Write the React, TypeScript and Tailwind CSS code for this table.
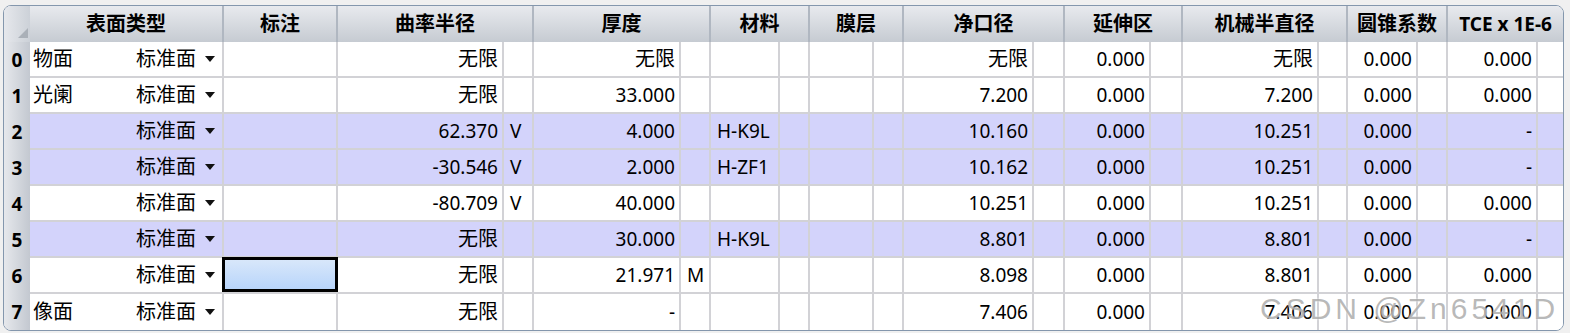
import React from "react";

const COLS =
  "grid grid-cols-[26px_194px_114px_166px_30px_147px_30px_69px_30px_64px_30px_130px_31px_86px_32px_136px_29px_70px_30px_90px_25px]";

type Row = {
  name?: string;
  hl?: boolean;
  r: string;
  rs?: string;
  t: string;
  ts?: string;
  mat?: string;
  ca: string;
  ext: string;
  mech: string;
  conic: string;
  tce: string;
  sel?: boolean;
};

const rows: Row[] = [
  { name: "物面", r: "无限", t: "无限", ca: "无限", ext: "0.000", mech: "无限", conic: "0.000", tce: "0.000" },
  { name: "光阑", r: "无限", t: "33.000", ca: "7.200", ext: "0.000", mech: "7.200", conic: "0.000", tce: "0.000" },
  { hl: true, r: "62.370", rs: "V", t: "4.000", mat: "H-K9L", ca: "10.160", ext: "0.000", mech: "10.251", conic: "0.000", tce: "-" },
  { hl: true, r: "-30.546", rs: "V", t: "2.000", mat: "H-ZF1", ca: "10.162", ext: "0.000", mech: "10.251", conic: "0.000", tce: "-" },
  { r: "-80.709", rs: "V", t: "40.000", ca: "10.251", ext: "0.000", mech: "10.251", conic: "0.000", tce: "0.000" },
  { hl: true, r: "无限", t: "30.000", mat: "H-K9L", ca: "8.801", ext: "0.000", mech: "8.801", conic: "0.000", tce: "-" },
  { r: "无限", t: "21.971", ts: "M", ca: "8.098", ext: "0.000", mech: "8.801", conic: "0.000", tce: "0.000", sel: true },
  { name: "像面", r: "无限", t: "-", ca: "7.406", ext: "0.000", mech: "7.406", conic: "0.000", tce: "0.000" },
];

const headers: { label: string; span: string }[] = [
  { label: "表面类型", span: "col-span-1" },
  { label: "标注", span: "col-span-1" },
  { label: "曲率半径", span: "col-span-2" },
  { label: "厚度", span: "col-span-2" },
  { label: "材料", span: "col-span-2" },
  { label: "膜层", span: "col-span-2" },
  { label: "净口径", span: "col-span-2" },
  { label: "延伸区", span: "col-span-2" },
  { label: "机械半直径", span: "col-span-2" },
  { label: "圆锥系数", span: "col-span-2" },
  { label: "TCE x 1E-6", span: "col-span-2" },
];

const cjk = (s: string) => /[\u4e00-\u9fff]/.test(s);

function Text({ v }: { v: string }) {
  return <span className={cjk(v) ? "text-[20px]" : "text-[19px]"}>{v}</span>;
}

function Val({ v, last }: { v: string; last: boolean }) {
  return (
    <div
      className={
        last
          ? "flex items-center justify-end pr-[4px] border-r-2 border-[#d2d2d6]"
          : "flex items-center justify-end pr-[4px] border-r-2 border-b-2 border-[#d2d2d6]"
      }
    >
      <Text v={v} />
    </div>
  );
}

function Sub({ v, last, end }: { v?: string; last: boolean; end?: boolean }) {
  let cls = "flex items-center pl-[6px] border-[#d2d2d6]";
  if (!end) cls += " border-r-2";
  if (!last) cls += " border-b-2";
  return <div className={cls}>{v && <Text v={v} />}</div>;
}

function Caret() {
  return (
    <svg width="10" height="6" viewBox="0 0 10 6" className="ml-[9px]">
      <path d="M0 0 L10 0 L5 6 Z" fill="#111" />
    </svg>
  );
}

function BodyRow({ row, i, last }: { row: Row; i: number; last: boolean }) {
  const bg = row.hl ? "bg-[#d3d3fb]" : "bg-white";
  return (
    <div className={`${COLS} h-[36px]`}>
      <div className="flex items-center justify-center bg-linear-to-r from-[#e6e8ec] to-[#c3c8d0] font-bold text-[19px]">
        {i}
      </div>
      {/* 表面类型 */}
      <div
        className={`${bg} ${last ? "" : "border-b-2"} border-r-2 border-[#d2d2d6] flex items-center justify-between pl-[3px] pr-[7px]`}
      >
        <span className="text-[20px]">{row.name ?? ""}</span>
        <span className="flex items-center text-[20px]">
          标准面
          <Caret />
        </span>
      </div>
      {/* 标注 */}
      <div className={`${bg} ${last ? "" : "border-b-2"} border-r-2 border-[#d2d2d6] relative`}>
        {row.sel && (
          <div className="absolute left-[-2px] top-[-1px] w-[116px] h-[35px] border-[3px] border-black bg-linear-to-b from-[#d8e7fa] to-[#b8d5fb]" />
        )}
      </div>
      <Cells row={row} bg={bg} last={last} />
    </div>
  );
}

function Cells({ row, bg, last }: { row: Row; bg: string; last: boolean }) {
  const wrap = (node: React.ReactNode, k: string) => (
    <div key={k} className={`${bg} grid`}>
      {node}
    </div>
  );
  return (
    <>
      {wrap(<Val v={row.r} last={last} />, "r")}
      {wrap(<Sub v={row.rs} last={last} />, "rs")}
      {wrap(<Val v={row.t} last={last} />, "t")}
      {wrap(<Sub v={row.ts} last={last} />, "ts")}
      {wrap(<Sub v={row.mat} last={last} />, "m")}
      {wrap(<Sub last={last} />, "ms")}
      {wrap(<Sub last={last} />, "c")}
      {wrap(<Sub last={last} />, "cs")}
      {wrap(<Val v={row.ca} last={last} />, "ca")}
      {wrap(<Sub last={last} />, "cas")}
      {wrap(<Val v={row.ext} last={last} />, "e")}
      {wrap(<Sub last={last} />, "es")}
      {wrap(<Val v={row.mech} last={last} />, "me")}
      {wrap(<Sub last={last} />, "mes")}
      {wrap(<Val v={row.conic} last={last} />, "co")}
      {wrap(<Sub last={last} />, "cos")}
      {wrap(<Val v={row.tce} last={last} />, "tc")}
      {wrap(<Sub last={last} end />, "tcs")}
    </>
  );
}

export default function App() {
  return (
    <div className="relative w-[1570px] h-[333px] bg-[#f0f0f0] pt-[5px] pl-[3px] font-['Noto_Sans','Noto_Sans_CJK_SC',sans-serif] text-black">
      <div className="w-[1561px] border border-[#8497ad] rounded-[8px] overflow-hidden bg-white">
        {/* ── Header ───────────────────────────── */}
        <div className={`${COLS} h-[36px] bg-linear-to-b from-[#e8eaee] to-[#c6cbd2]`}>
          <div className="relative bg-linear-to-r from-[#e6e8ec] to-[#ccd1d8]">
            <svg width="10" height="10" viewBox="0 0 10 10" className="absolute right-[2px] bottom-[4px]">
              <path d="M10 0 L10 10 L0 10 Z" fill="#aab0b8" />
            </svg>
          </div>
          {headers.map((h, i) => (
            <div
              key={h.label}
              className={`${h.span} flex items-center justify-center font-bold ${
                cjk(h.label) ? "text-[20px]" : "text-[19px]"
              } ${i === headers.length - 1 ? "" : "border-r-2 border-[#b0b7c1]"}`}
            >
              {h.label}
            </div>
          ))}
        </div>

        {/* ── Rows ─────────────────────────────── */}
        {rows.map((row, i) => (
          <BodyRow key={i} row={row} i={i} last={i === rows.length - 1} />
        ))}
      </div>

      {/* watermark */}
      <div className="absolute left-[1260px] top-[294px] text-[30px] tracking-[4px] font-['Liberation_Sans',sans-serif] text-[#8a8a8a]/60 leading-none [text-shadow:0_0_2px_#fff]">
        CSDN @Zn6541D
      </div>
    </div>
  );
}
